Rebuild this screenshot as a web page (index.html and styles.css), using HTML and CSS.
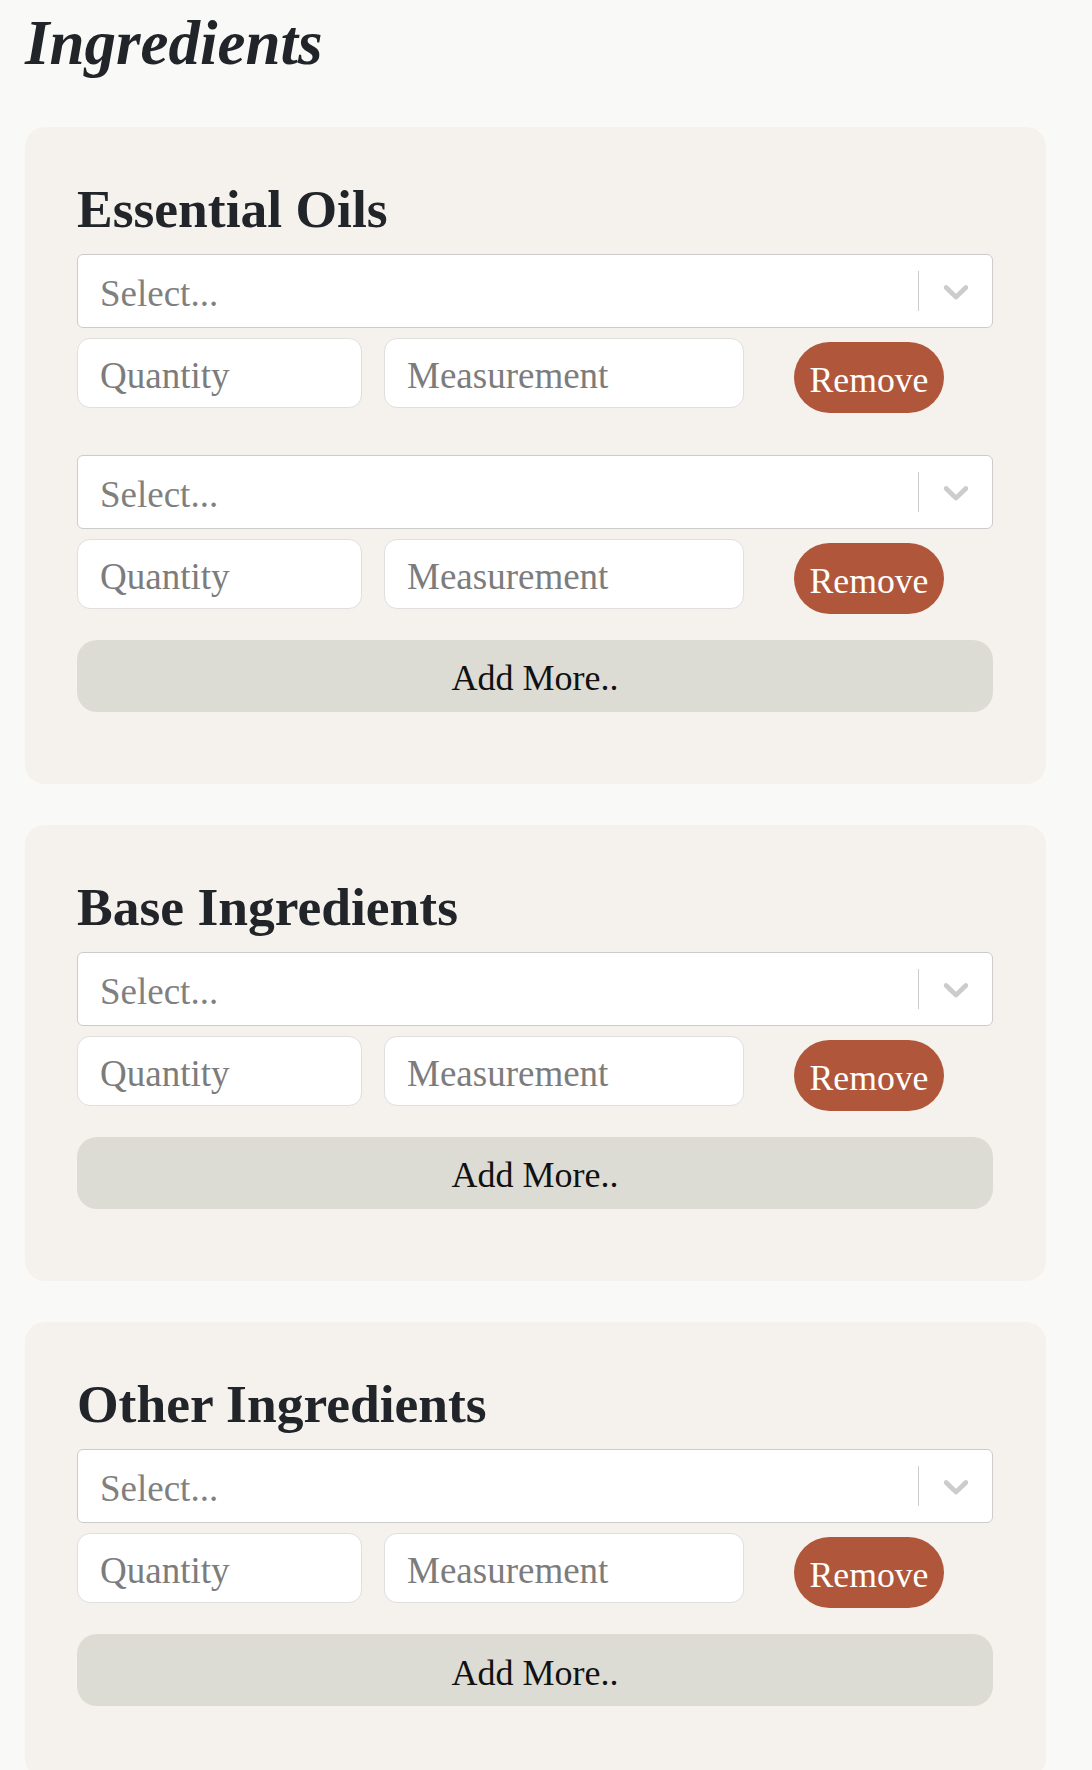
FILE: index.html
```html
<!DOCTYPE html>
<html lang="en">
<head>
<meta charset="utf-8">
<title>Ingredients</title>
<link rel="stylesheet" href="styles.css">
</head>
<body>
<main class="page">
  <h1 class="page-title">Ingredients</h1>

  <section class="card">
    <h2 class="card-title">Essential Oils</h2>
    <div class="items">
      <div class="item">
        <div class="select">
          <span class="select-value">Select...</span>
          <span class="select-sep"></span>
          <span class="select-ind"><svg viewBox="0 0 20 20" width="42" height="42" aria-hidden="true"><path d="M4.516 7.548c0.436-0.446 1.043-0.481 1.576 0l3.908 3.747 3.908-3.747c0.533-0.481 1.141-0.446 1.574 0 0.436 0.445 0.408 1.197 0 1.615-0.406 0.418-4.695 4.502-4.695 4.502-0.217 0.223-0.502 0.335-0.787 0.335s-0.57-0.112-0.789-0.335c0 0-4.287-4.084-4.695-4.502s-0.436-1.17 0-1.615z"/></svg></span>
        </div>
        <div class="item-row">
          <input class="field field-qty" type="text" placeholder="Quantity">
          <input class="field field-meas" type="text" placeholder="Measurement">
          <button class="btn-remove" type="button">Remove</button>
        </div>
      </div>
      <div class="item">
        <div class="select">
          <span class="select-value">Select...</span>
          <span class="select-sep"></span>
          <span class="select-ind"><svg viewBox="0 0 20 20" width="42" height="42" aria-hidden="true"><path d="M4.516 7.548c0.436-0.446 1.043-0.481 1.576 0l3.908 3.747 3.908-3.747c0.533-0.481 1.141-0.446 1.574 0 0.436 0.445 0.408 1.197 0 1.615-0.406 0.418-4.695 4.502-4.695 4.502-0.217 0.223-0.502 0.335-0.787 0.335s-0.57-0.112-0.789-0.335c0 0-4.287-4.084-4.695-4.502s-0.436-1.17 0-1.615z"/></svg></span>
        </div>
        <div class="item-row">
          <input class="field field-qty" type="text" placeholder="Quantity">
          <input class="field field-meas" type="text" placeholder="Measurement">
          <button class="btn-remove" type="button">Remove</button>
        </div>
      </div>
    </div>
    <button class="btn-add" type="button">Add More..</button>
  </section>

  <section class="card">
    <h2 class="card-title">Base Ingredients</h2>
    <div class="items">
      <div class="item">
        <div class="select">
          <span class="select-value">Select...</span>
          <span class="select-sep"></span>
          <span class="select-ind"><svg viewBox="0 0 20 20" width="42" height="42" aria-hidden="true"><path d="M4.516 7.548c0.436-0.446 1.043-0.481 1.576 0l3.908 3.747 3.908-3.747c0.533-0.481 1.141-0.446 1.574 0 0.436 0.445 0.408 1.197 0 1.615-0.406 0.418-4.695 4.502-4.695 4.502-0.217 0.223-0.502 0.335-0.787 0.335s-0.57-0.112-0.789-0.335c0 0-4.287-4.084-4.695-4.502s-0.436-1.17 0-1.615z"/></svg></span>
        </div>
        <div class="item-row">
          <input class="field field-qty" type="text" placeholder="Quantity">
          <input class="field field-meas" type="text" placeholder="Measurement">
          <button class="btn-remove" type="button">Remove</button>
        </div>
      </div>
    </div>
    <button class="btn-add" type="button">Add More..</button>
  </section>

  <section class="card">
    <h2 class="card-title">Other Ingredients</h2>
    <div class="items">
      <div class="item">
        <div class="select">
          <span class="select-value">Select...</span>
          <span class="select-sep"></span>
          <span class="select-ind"><svg viewBox="0 0 20 20" width="42" height="42" aria-hidden="true"><path d="M4.516 7.548c0.436-0.446 1.043-0.481 1.576 0l3.908 3.747 3.908-3.747c0.533-0.481 1.141-0.446 1.574 0 0.436 0.445 0.408 1.197 0 1.615-0.406 0.418-4.695 4.502-4.695 4.502-0.217 0.223-0.502 0.335-0.787 0.335s-0.57-0.112-0.789-0.335c0 0-4.287-4.084-4.695-4.502s-0.436-1.17 0-1.615z"/></svg></span>
        </div>
        <div class="item-row">
          <input class="field field-qty" type="text" placeholder="Quantity">
          <input class="field field-meas" type="text" placeholder="Measurement">
          <button class="btn-remove" type="button">Remove</button>
        </div>
      </div>
    </div>
    <button class="btn-add" type="button">Add More..</button>
  </section>
</main>
</body>
</html>
```

FILE: styles.css
```css
* {
  box-sizing: border-box;
}

html, body {
  margin: 0;
  padding: 0;
  background: #f9f9f7;
}

body {
  font-family: "Liberation Serif", "Times New Roman", serif;
  color: #212529;
}

.page {
  padding: 6px 46px 0 25px;
}

.page-title {
  margin: 0 0 45px;
  font-family: "Liberation Serif", serif;
  font-style: italic;
  font-weight: 700;
  font-size: 63px;
  line-height: 1.2;
  color: #212529;
}

.card {
  background: #f5f2ee;
  border-radius: 20px;
  padding: 50px 53px 72px 52px;
  margin-bottom: 41px;
}

.card-title {
  margin: 0 0 13px;
  font-family: "Liberation Serif", serif;
  font-weight: 700;
  font-size: 53.5px;
  line-height: 1.2;
  color: #212529;
}

.items {
  display: flex;
  flex-direction: column;
  gap: 42px;
}

.select {
  display: flex;
  align-items: center;
  height: 74px;
  background: #ffffff;
  border: 1px solid #cccccc;
  border-radius: 6px;
}

.select-value {
  flex: 1;
  padding-left: 22px;
  font-size: 37px;
  color: #808080;
  padding-top: 5px;
}

.select-sep {
  align-self: stretch;
  width: 1px;
  margin: 16px 0;
  background: #cccccc;
}

.select-ind {
  display: flex;
  align-items: center;
  padding: 0 15px 0 16px;
}

.select-ind svg {
  display: block;
  fill: #cccccc;
}

.item-row {
  display: flex;
  align-items: flex-start;
  margin-top: 10px;
}

.field {
  height: 70px;
  padding: 5px 22px 0;
  background: #ffffff;
  border: 1px solid #dfdfdf;
  border-radius: 13px;
  font-family: "Liberation Serif", serif;
  font-size: 37px;
  color: #212529;
  outline: none;
}

.field::placeholder {
  color: #7c7c7c;
  opacity: 1;
}

.field-qty {
  width: 285px;
}

.field-meas {
  width: 360px;
  margin-left: 22px;
}

.btn-remove {
  width: 150px;
  height: 71px;
  margin: 4px 0 0 50px;
  padding: 5px 0 0;
  border: none;
  border-radius: 36px;
  background: #b0573b;
  color: #ffffff;
  font-family: "Liberation Serif", serif;
  font-size: 35.7px;
  cursor: pointer;
}

.btn-add {
  display: block;
  width: 100%;
  height: 72px;
  margin-top: 26px;
  padding: 5px 0 0;
  border: none;
  border-radius: 20px;
  background: #dcdbd4;
  color: #111111;
  font-family: "Liberation Serif", serif;
  font-size: 36px;
  cursor: pointer;
}
```
